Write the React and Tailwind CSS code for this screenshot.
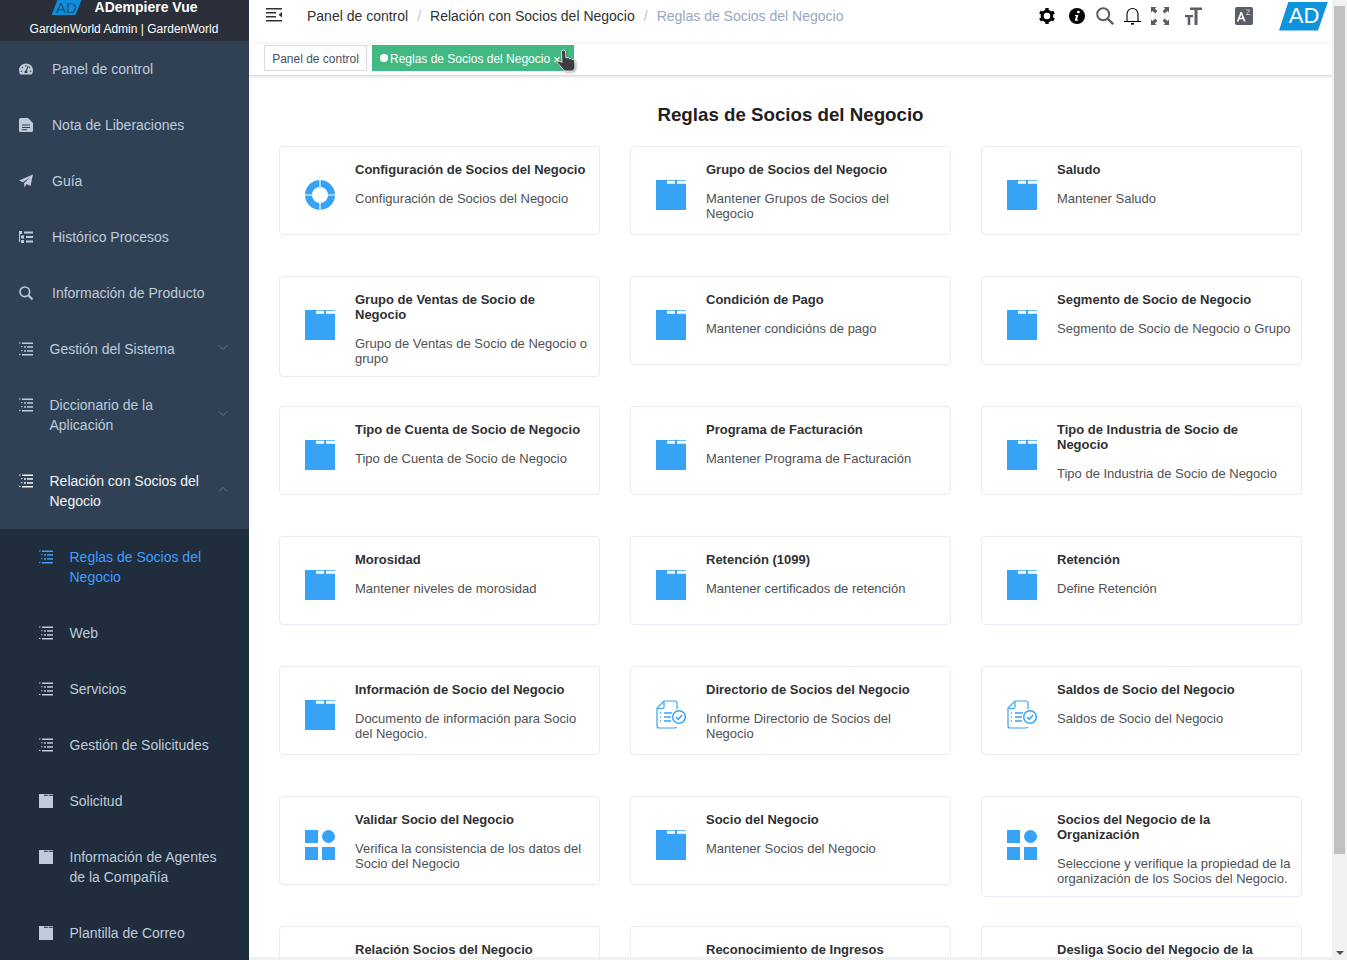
import React from "react";
import { FaTachometerAlt } from "react-icons/fa";

const FONT = "font-['Liberation_Sans',Arial,sans-serif]";

const TreeIcon = ({ className = "" }) => (
  <svg viewBox="0 0 14 14" className={`w-[14px] h-[14px] shrink-0 ${className}`} fill="currentColor">
    <rect x="0" y="0.5" width="1.5" height="1" />
    <rect x="3" y="0.5" width="11" height="1.5" />
    <rect x="2" y="4.2" width="1.5" height="1" />
    <rect x="5" y="4.2" width="2" height="1.5" />
    <rect x="8" y="4.2" width="6" height="1.5" />
    <rect x="2" y="8.2" width="1.5" height="1" />
    <rect x="5" y="8.2" width="2" height="1.5" />
    <rect x="8" y="8.2" width="6" height="1.5" />
    <rect x="0" y="12" width="1.5" height="1" />
    <rect x="3" y="12" width="11" height="1.5" />
  </svg>
);

const TableIcon = ({ className = "" }) => (
  <svg viewBox="0 0 14 14" className={`w-[14px] h-[14px] shrink-0 ${className}`} fill="currentColor">
    <rect x="0" y="1" width="3" height="3" />
    <rect x="5" y="1.5" width="9" height="2" />
    <rect x="2" y="5.5" width="3" height="3" />
    <rect x="7" y="6" width="7" height="2" />
    <rect x="2" y="10" width="3" height="3" />
    <rect x="7" y="10.5" width="7" height="2" />
    <rect x="0" y="4" width="1" height="8" />
  </svg>
);

const SideFolder = ({ className = "" }) => (
  <svg viewBox="0 0 14 14" className={`w-[14px] h-[14px] shrink-0 ${className}`} fill="currentColor">
    <path fillRule="evenodd" d="M0 0h14v14H0zM5 0.8v1h3.800v-1zM9.800 0.8v1H14v-1z" />
  </svg>
);

const FileIcon = ({ className = "" }) => (
  <svg viewBox="0 0 14 14" className={`w-[14px] h-[14px] shrink-0 ${className}`} fill="currentColor">
    <path fillRule="evenodd" d="M1.500 0H9l5 5v7.500A1.500 1.500 0 0 1 12.500 14h-11A1.500 1.500 0 0 1 0 12.500v-11A1.500 1.500 0 0 1 1.500 0zM3 6.500v1h8v-1zM3 9v1h8V9zM3 11.300v.900h5v-.900z" />
  </svg>
);

const PlaneIcon = ({ className = "" }) => (
  <svg viewBox="0 0 14 14" className={`w-[14px] h-[14px] shrink-0 ${className}`} fill="currentColor">
    <path d="M14 0.500L11.500 12 7.500 10 5.500 13.500 5 9.300 11 3.500 3.800 8.300 0 6.500z" />
  </svg>
);

const SearchIcon = ({ className = "" }) => (
  <svg viewBox="0 0 14 14" className={`w-[14px] h-[14px] shrink-0 ${className}`} fill="none" stroke="currentColor" strokeWidth="1.6">
    <circle cx="5.800" cy="5.800" r="4.800" />
    <path d="M9.300 9.300l4.200 4.200" strokeWidth="2" />
  </svg>
);

const Chevron = ({ up }) => (
  <svg viewBox="0 0 12 8" className={`w-[10px] h-[7px] text-[#6f7f93] ${up ? "rotate-180" : ""}`} fill="none" stroke="currentColor" strokeWidth="1">
    <path d="M1 1.500l5 5 5-5" />
  </svg>
);

const SideIcon = ({ name, className }) => {
  if (name === "dash") return <FaTachometerAlt className={`w-[14px] h-[14px] shrink-0 ${className}`} />;
  if (name === "file") return <FileIcon className={className} />;
  if (name === "plane") return <PlaneIcon className={className} />;
  if (name === "search") return <SearchIcon className={className} />;
  if (name === "table") return <TableIcon className={className} />;
  if (name === "folder") return <SideFolder className={className} />;
  return <TreeIcon className={className} />;
};

const topMenu = [
  { icon: "dash", label: "Panel de control" },
  { icon: "file", label: "Nota de Liberaciones" },
  { icon: "plane", label: "Guía" },
  { icon: "table", label: "Histórico Procesos" },
  { icon: "search", label: "Información de Producto" },
];

const groupMenu = [
  { label: "Gestión del Sistema" },
  { label: "Diccionario de la Aplicación" },
  { label: "Relación con Socios del Negocio", open: true },
];

const subMenu = [
  { icon: "tree", label: "Reglas de Socios del Negocio", active: true },
  { icon: "tree", label: "Web" },
  { icon: "tree", label: "Servicios" },
  { icon: "tree", label: "Gestión de Solicitudes" },
  { icon: "folder", label: "Solicitud" },
  { icon: "folder", label: "Información de Agentes de la Compañía" },
  { icon: "folder", label: "Plantilla de Correo" },
];

const cards = [
  { icon: "ring", title: "Configuración de Socios del Negocio", desc: "Configuración de Socios del Negocio" },
  { title: "Grupo de Socios del Negocio", desc: "Mantener Grupos de Socios del Negocio" },
  { title: "Saludo", desc: "Mantener Saludo" },
  { title: "Grupo de Ventas de Socio de Negocio", desc: "Grupo de Ventas de Socio de Negocio o grupo" },
  { title: "Condición de Pago", desc: "Mantener condicións de pago" },
  { title: "Segmento de Socio de Negocio", desc: "Segmento de Socio de Negocio o Grupo" },
  { title: "Tipo de Cuenta de Socio de Negocio", desc: "Tipo de Cuenta de Socio de Negocio" },
  { title: "Programa de Facturación", desc: "Mantener Programa de Facturación" },
  { title: "Tipo de Industria de Socio de Negocio", desc: "Tipo de Industria de Socio de Negocio" },
  { title: "Morosidad", desc: "Mantener niveles de morosidad" },
  { title: "Retención (1099)", desc: "Mantener certificados de retención" },
  { title: "Retención", desc: "Define Retención" },
  { title: "Información de Socio del Negocio", desc: "Documento de información para Socio del Negocio." },
  { icon: "report", title: "Directorio de Socios del Negocio", desc: "Informe Directorio de Socios del Negocio" },
  { icon: "report", title: "Saldos de Socio del Negocio", desc: "Saldos de Socio del Negocio" },
  { icon: "grid", title: "Validar Socio del Negocio", desc: "Verifica la consistencia de los datos del Socio del Negocio" },
  { title: "Socio del Negocio", desc: "Mantener Socios del Negocio" },
  { icon: "grid", title: "Socios del Negocio de la Organización", desc: "Seleccione y verifique la propiedad de la organización de los Socios del Negocio." },
  { title: "Relación Socios del Negocio", desc: "Mantener Relación de Socios" },
  { title: "Reconocimiento de Ingresos", desc: "Mantener Reconocimiento de Ingresos" },
  { title: "Desliga Socio del Negocio de la Organización", desc: "Desliga Socio del Negocio" },
];

const CardIcon = ({ name }) => {
  if (name === "ring")
    return (
      <svg viewBox="0 0 30 30" className="w-[30px] h-[30px]">
        <circle cx="15" cy="15" r="11.5" fill="none" stroke="#36a3f7" strokeWidth="7" />
        <path d="M15 0v8M15 22v8M0 15h8M22 15h8" stroke="#fff" strokeWidth="1.2" />
      </svg>
    );
  if (name === "grid")
    return (
      <svg viewBox="0 0 30 30" className="w-[30px] h-[30px]" fill="#36a3f7">
        <rect x="0" y="0" width="13" height="13" />
        <circle cx="23.5" cy="6.500" r="6.500" />
        <rect x="0" y="17" width="13" height="13" />
        <rect x="17" y="17" width="13" height="13" />
      </svg>
    );
  if (name === "report")
    return (
      <svg viewBox="0 0 30 30" className="w-[30px] h-[30px]" fill="none" stroke="#36a3f7" strokeWidth="1.2">
        <path d="M21 9V3a2 2 0 0 0-2-2H8L1 8v18a2 2 0 0 0 2 2h16a2 2 0 0 0 1.600-.9" />
        <path d="M8 1.500V7a1.500 1.500 0 0 1-1.500 1.500H1.500" />
        <path d="M4 13h1M4 17h1M4 21h1M8 13h8M8 17h7M8 21h7" strokeWidth="1.5" />
        <circle cx="23" cy="17" r="6.300" strokeWidth="1.5" />
        <path d="M20 17l2.200 2.300 4-4.200" strokeWidth="1.5" />
      </svg>
    );
  return (
    <svg viewBox="0 0 30 30" className="w-[30px] h-[30px]" fill="#36a3f7">
      <path d="M0 0h30v30H0z" />
      <path d="M11 0.800h8v3h-8zM21 0.800h9v3h-9z" fill="#fff" />
    </svg>
  );
};

const Card = ({ card }) => (
  <div className="w-[321px] min-h-[89px] flex items-start bg-white border border-[#e6ebf5] rounded-[4px] pt-[15px] pb-[10px]">
    <div className="w-[75px] shrink-0 pl-[25px] pt-[18px]">
      <CardIcon name={card.icon} />
    </div>
    <div className="w-[234px] text-[13px] leading-[15px]">
      <div className="font-bold text-[#303133]">{card.title}</div>
      <div className="mt-[14px] text-[#4f5154]">{card.desc}</div>
    </div>
  </div>
);

function Sidebar() {
  return (
    <aside className="w-[249px] shrink-0 h-full bg-[#304156] overflow-hidden text-sm leading-5">
      <div className="h-[41px] bg-[#2b2f3a] overflow-hidden">
        <div className="flex justify-center gap-[13px] h-[15px]">
          <div className="w-[30px] h-[15px] bg-[#0e8fdb] [clip-path:polygon(20%_0,100%_0,80%_100%,0_100%)] flex items-center justify-center text-[15px] leading-none text-[#1d4e79]">
            AD
          </div>
          <div className="font-bold text-white leading-[15px]">ADempiere Vue</div>
        </div>
        <div className="mt-[6px] pr-[1px] text-center text-xs leading-4 text-white">GardenWorld Admin | GardenWorld</div>
      </div>

      {topMenu.map((item) => (
        <div key={item.label} className="flex items-start py-[18px] pl-[19px] text-[#bfcbd9]">
          <SideIcon name={item.icon} className="mt-[3px]" />
          <span className="ml-[19px]">{item.label}</span>
        </div>
      ))}

      {groupMenu.map((item) => (
        <div key={item.label} className={`flex items-start py-[18px] pl-[19px] ${item.open ? "text-[#f4f4f5]" : "text-[#bfcbd9]"}`}>
          <SideIcon name="tree" className="mt-[3px]" />
          <span className="ml-[16.5px] w-[155px]">{item.label}</span>
          <span className="self-center ml-[13px] mb-[4px] flex">
            <Chevron up={item.open} />
          </span>
        </div>
      ))}

      <div className="bg-[#1f2d3d]">
        {subMenu.map((item) => (
          <div key={item.label} className={`flex items-start py-[18px] pl-[39px] ${item.active ? "text-[#409eff]" : "text-[#bfcbd9]"}`}>
            <SideIcon name={item.icon} className="mt-[3px]" />
            <span className="ml-[16.5px] w-[152px]">{item.label}</span>
          </div>
        ))}
      </div>
    </aside>
  );
}

function Navbar() {
  return (
    <div className="h-[42px] shrink-0 flex items-start pt-[3px] bg-white shadow-[0_1px_3px_rgba(0,21,41,0.06)] relative text-[#5a5e66]">
      <svg viewBox="0 0 16 14" className="w-[16px] h-[14px] ml-[17px] mt-[5px] text-[#303133]" fill="currentColor">
        <rect x="0" y="0" width="16" height="1.5" />
        <rect x="0" y="4" width="10" height="1.5" />
        <rect x="0" y="8" width="10" height="1.5" />
        <rect x="0" y="12" width="16" height="1.5" />
        <path d="M16 4v5.500l-3.500-2.700z" />
      </svg>
      <div className="ml-[25px] h-[26px] flex items-center text-sm text-[#303133]">
        <span>Panel de control</span>
        <span className="mx-[9px] text-[#c0c4cc]">/</span>
        <span>Relación con Socios del Negocio</span>
        <span className="mx-[9px] text-[#c0c4cc]">/</span>
        <span className="text-[#97a8be]">Reglas de Socios del Negocio</span>
      </div>
      <div className="ml-auto flex items-center h-[26px] pr-[3px]">
        {/* gear */}
        <svg viewBox="0 0 16 16" className="w-[16px] h-[16px]">
          <circle cx="8" cy="8" r="4.800" fill="none" stroke="#000" strokeWidth="3" />
          <path d="M8 0v3M8 13v3M1 4l2.600 1.500M12.400 10.500L15 12M1 12l2.600-1.500M12.400 5.500L15 4" stroke="#000" strokeWidth="3.400" />
        </svg>
        {/* info */}
        <svg viewBox="0 0 16 16" className="w-[16px] h-[16px] ml-[14px]">
          <circle cx="8" cy="8" r="8" fill="#000" />
          <circle cx="9.400" cy="4.100" r="1.400" fill="#fff" />
          <path d="M6.200 7h3.200L8 11.600h1.300l-.3 1.200H5.700L7 8.100H5.900z" fill="#fff" />
        </svg>
        {/* search */}
        <svg viewBox="0 0 18 18" className="w-[18px] h-[18px] ml-[11px]" fill="none" stroke="#5a5e66" strokeWidth="2">
          <circle cx="7.200" cy="7.200" r="6" />
          <path d="M11.600 11.600l5.600 5.600" strokeWidth="2.400" />
        </svg>
        {/* bell */}
        <svg viewBox="0 0 17 18" className="w-[17px] h-[18px] ml-[10px]" fill="none" stroke="#000" strokeWidth="1.100">
          <path d="M0 14.500h17" />
          <path d="M3 14.500V7a5.500 5.500 0 0 1 11 0v7.500" />
          <path d="M7 16.800h3" strokeWidth="1.600" />
        </svg>
        {/* fullscreen */}
        <svg viewBox="0 0 18 18" className="w-[18px] h-[18px] ml-[10px]" fill="#5a5e66">
          <path d="M0 0h5.500L3.900 1.600 6.500 4.200 4.200 6.500 1.600 3.900 0 5.500zM18 0v5.500l-1.600-1.600-2.600 2.600-2.300-2.300 2.600-2.600L12.500 0zM0 18v-5.500l1.600 1.600 2.600-2.600 2.300 2.300-2.600 2.600L5.500 18zM18 18h-5.500l1.600-1.600-2.600-2.600 2.300-2.300 2.600 2.600 1.600-1.600z" />
        </svg>
        {/* text size */}
        <svg viewBox="0 0 17 18" className="w-[17px] h-[18px] ml-[16px]" fill="#5a5e66">
          <path d="M5 0.500h12v2.500h-4.500v15H9.500V3H5zM0 8h8v2.200H5.300V18H2.700v-7.800H0z" />
        </svg>
        {/* language */}
        <svg viewBox="0 0 18 18" className="w-[18px] h-[18px] ml-[33px]">
          <rect width="18" height="18" rx="2" fill="#5a5e66" />
          <path d="M1.800 14.500L5.500 5h1.400l3.700 9.500H8.800l-.8-2.200H4.400l-.8 2.200zM5 10.800h2.400L6.200 7.400z" fill="#fff" />
          <path d="M11 3h4l-3.600 4.500h4" fill="none" stroke="#c8cacc" strokeWidth="0.900" />
        </svg>
        <div className="ml-[26px] w-[50px] h-[29px] bg-[#0e94dc] [clip-path:polygon(19%_0,98%_0,78%_100%,0_100%)] flex items-center justify-center text-[22px] leading-none text-white">
          AD
        </div>
      </div>
    </div>
  );
}

function TagsBar() {
  return (
    <div className="h-[34px] shrink-0 flex items-start gap-[5px] pl-[15px] pt-[3px] bg-white border-b border-[#d8dce5] shadow-[0_1px_3px_rgba(0,0,0,0.12)]">
      <div className="h-[26px] w-[103px] pt-[2px] flex items-center justify-center border border-[#d8dce5] text-xs text-[#495060]">
        Panel de control
      </div>
      <div className="relative h-[26px] w-[202px] pt-[2px] flex items-center pl-[8px] bg-[#42b983] text-xs text-white">
        <span className="w-[8px] h-[8px] rounded-full bg-white mr-[2px] -mt-[2px]" />
        <span>Reglas de Socios del Negocio</span>
        <span className="ml-[3px] text-[13px] leading-none">×</span>
        {/* mouse pointer in the capture */}
        <svg viewBox="0 0 21 23" className="absolute left-[184px] top-[4px] w-[21px] h-[23px] drop-shadow-[1px_1px_1px_rgba(0,0,0,0.35)]">
          <path
            d="M5.500 3a2 2 0 0 1 4 0l.500 6 1-.3a1.800 1.800 0 0 1 2.300.8l.2.2a1.800 1.800 0 0 1 2.400.8 1.800 1.800 0 0 1 2.600 1.200L19 17c0 2-1 3-2 5H8.500L2 14.500c-1-1.200.2-3 2-2.200l2 1.200z"
            fill="#3c3c42"
            stroke="#fff"
            strokeWidth="0.800"
          />
        </svg>
      </div>
    </div>
  );
}

export default function App() {
  return (
    <div className={`${FONT} w-full h-screen flex overflow-hidden bg-white`}>
      <Sidebar />
      <main className="flex-1 min-w-0 h-full flex flex-col overflow-hidden">
        <Navbar />
        <TagsBar />
        <div className="flex-1 overflow-hidden">
          <h1 className="pt-[28px] h-[70px] text-center text-[18.72px] leading-[21px] font-bold text-[#1f2022]">
            Reglas de Socios del Negocio
          </h1>
          <div className="grid grid-cols-[321px_321px_321px] gap-x-[30px] auto-rows-[130px] items-start pl-[30px]">
            {cards.map((card) => (
              <Card key={card.title} card={card} />
            ))}
          </div>
        </div>
        <div className="h-[3px] shrink-0 bg-[#f1f1f1]" />
      </main>
      <div className="w-[15px] shrink-0 h-full bg-[#f1f1f1] flex flex-col items-center">
        <div className="w-[11px] h-[848px] mt-[6px] bg-[#c1c1c1]" />
        <div className="mt-auto mb-[5px] w-0 h-0 border-x-[4px] border-x-transparent border-t-[4px] border-t-[#505050]" />
      </div>
    </div>
  );
}
